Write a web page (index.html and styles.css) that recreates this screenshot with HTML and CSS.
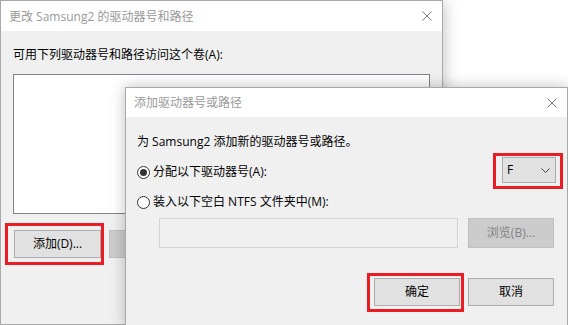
FILE: index.html
```html
<!DOCTYPE html>
<html lang="zh-CN">

<head>
    <meta charset="UTF-8">
    <title>添加驱动器号或路径</title>
    <link rel="stylesheet" href="styles.css">
</head>

<body>
    <div class="desk">

        <div class="dlg dlg-back">
            <div class="titlebar">
                <span class="title">更改 Samsung2 的驱动器号和路径</span>
                <svg class="close" width="10" height="10" viewBox="0 0 10 10">
                    <path d="M0.5 0.5 L9.5 9.5 M9.5 0.5 L0.5 9.5" />
                </svg>
            </div>
            <div class="back-body">
                <div class="label">可用下列驱动器号和路径访问这个卷(A):</div>
                <div class="listbox"></div>
                <div class="back-buttons">
                    <button class="btn btn-add">添加(D)...</button>
                    <button class="btn btn-disabled">更改(C)...</button>
                </div>
            </div>
        </div>

        <div class="dlg dlg-front">
            <div class="titlebar titlebar-front">
                <span class="title">添加驱动器号或路径</span>
                <svg class="close" width="10" height="10" viewBox="0 0 10 10">
                    <path d="M0.5 0.5 L9.5 9.5 M9.5 0.5 L0.5 9.5" />
                </svg>
            </div>
            <div class="front-body">
                <div class="intro">为 Samsung2 添加新的驱动器号或路径。</div>

                <div class="radio-row row-letter">
                    <label class="radio checked"><span class="dot"></span>分配以下驱动器号(A):</label>
                    <div class="combo">
                        <span>F</span>
                        <svg width="9" height="5" viewBox="0 0 9 5">
                            <path d="M0.5 0.5 L4.5 4.5 L8.5 0.5" />
                        </svg>
                    </div>
                </div>

                <div class="radio-row row-folder">
                    <label class="radio"><span class="dot"></span>装入以下空白 NTFS 文件夹中(M):</label>
                </div>

                <div class="path-row">
                    <div class="path-input"></div>
                    <button class="btn btn-disabled btn-browse">浏览(B)...</button>
                </div>

                <div class="front-buttons">
                    <button class="btn">确定</button>
                    <button class="btn">取消</button>
                </div>
            </div>
        </div>

        <div class="mark mark-add"></div>
        <div class="mark mark-combo"></div>
        <div class="mark mark-ok"></div>
    </div>
</body>

</html>
```

FILE: styles.css
```css
body {
    margin: 0;
    background: white;
    font-family: 'Open Sans', 'Noto Sans CJK SC', sans-serif;
    font-size: 12px;
    line-height: 16px;
    color: #000;
}

.desk {
    position: relative;
    width: 568px;
    height: 325px;
    overflow: hidden;
}

/* windows */
.dlg {
    position: absolute;
    width: 441px;
    border: 1px solid #a9a9a9;
    background: #f0f0f0;
}

.dlg-back {
    left: 0;
    top: 0;
    height: 323px;
    box-shadow: 2px 2px 14px rgba(0, 0, 0, 0.22);
}

.dlg-front {
    left: 125px;
    top: 87px;
    height: 240px;
    box-shadow: 0 0 14px rgba(0, 0, 0, 0.25);
}

.titlebar {
    height: 30px;
    background: white;
    display: flex;
    align-items: center;
    justify-content: space-between;
    padding: 0 10px 0 8px;
}

.titlebar-front {
    height: 29px;
}

.title {
    color: #999;
    padding-top: 1px;
}

.close path {
    stroke: #7a7a7a;
    stroke-width: 1;
    fill: none;
}

/* buttons */
.btn {
    font: inherit;
    color: #000;
    width: 86px;
    height: 28px;
    padding: 0;
    background: #e1e1e1;
    border: 1px solid #adadad;
}

.btn-disabled {
    background: #cccccc;
    border-color: #bfbfbf;
    color: #838383;
}

/* back dialog */
.back-body {
    padding: 16px 12px 0;
}

.listbox {
    margin-top: 11px;
    width: 415px;
    height: 138px;
    background: white;
    border: 1px solid #82838a;
}

.back-buttons {
    margin-top: 16px;
    margin-left: 1px;
    display: flex;
    gap: 8px;
}

.btn-add {
    width: 87px;
}

/* front dialog */
.front-body {
    padding: 17px 13px 0 11px;
}

.radio-row {
    display: flex;
    align-items: center;
}

.row-letter {
    margin-top: 7px;
}

.row-letter .radio {
    margin-top: 4px;
}

.row-folder {
    margin-top: 11px;
}

.radio {
    display: flex;
    align-items: center;
    gap: 3px;
}

.dot {
    width: 11px;
    height: 11px;
    border: 1px solid #333;
    border-radius: 50%;
    background: white;
    display: flex;
    align-items: center;
    justify-content: center;
}

.checked .dot::after {
    content: '';
    width: 7px;
    height: 7px;
    border-radius: 50%;
    background: #333;
}

.combo {
    margin-left: auto;
    margin-right: -2px;
    width: 54px;
    height: 26px;
    box-sizing: border-box;
    padding: 0 5px 0 4px;
    background: #e1e1e1;
    border: 1px solid #adadad;
    display: flex;
    align-items: center;
    justify-content: space-between;
}

.combo path {
    stroke: #444;
    stroke-width: 1;
    fill: none;
}

.path-row {
    margin-top: 8px;
    margin-left: 22px;
    display: flex;
    gap: 10px;
}

.path-input {
    width: 297px;
    height: 28px;
    border: 1px solid #d4d4d4;
    background: #f0f0f0;
}

.btn-browse {
    height: 30px;
}

.front-buttons {
    margin-top: 30px;
    display: flex;
    justify-content: flex-end;
    gap: 8px;
}

/* red annotation boxes */
.mark {
    position: absolute;
    border: 3px solid #ec1c24;
}

.mark-add {
    left: 5px;
    top: 223px;
    width: 93px;
    height: 36px;
}

.mark-combo {
    left: 493px;
    top: 153px;
    width: 64px;
    height: 30px;
}

.mark-ok {
    left: 367px;
    top: 273px;
    width: 91px;
    height: 33px;
}
```
